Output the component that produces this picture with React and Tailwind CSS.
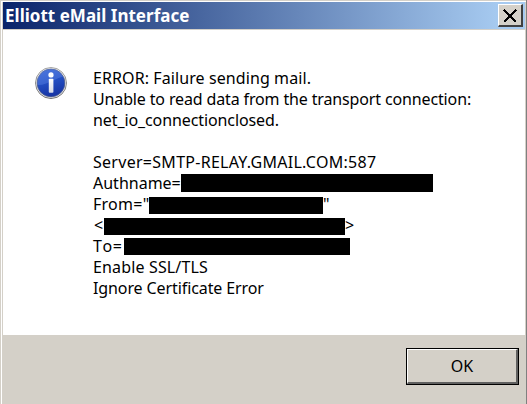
import React from 'react';

const messageLines = [
    { text: 'ERROR: Failure sending mail.', className: 'tracking-[0.09px]' },
    { text: 'Unable to read data from the transport connection:', className: 'tracking-[-0.14px]' },
    { text: 'net_io_connectionclosed.', className: 'tracking-[-0.1px]' },
    { text: '', className: '' },
    { text: 'Server=SMTP-RELAY.GMAIL.COM:587', className: 'tracking-[0.28px]' },
    { text: 'Authname=', className: 'w-[88px]', bar: 'w-[252px] h-[18px] mt-px' },
    { text: 'From="', className: 'w-[56px] tracking-[0.25px]', bar: 'w-[174px] h-[17px] mt-[3px]', after: '"' },
    { text: '<', className: 'w-[11px] pl-px', bar: 'w-[241px] h-[17px] mt-[3px]', after: '>' },
    { text: 'To=', className: 'w-[31px] tracking-[0.6px] [font-kerning:none]', bar: 'w-[226px] h-[17px] mt-[2px]' },
    { text: 'Enable SSL/TLS', className: 'tracking-[0.15px]' },
    { text: 'Ignore Certificate Error', className: 'tracking-[-0.1px]' },
];

const InfoIcon = () => (
    <svg width="34" height="34" viewBox="0 0 34 34" className="shrink-0">
        <defs>
            <linearGradient id="ball" x1="0" y1="0" x2="0.3" y2="1">
                <stop offset="0" stopColor="#3c6ad8" />
                <stop offset="0.5" stopColor="#2450c4" />
                <stop offset="1" stopColor="#1736a6" />
            </linearGradient>
            <linearGradient id="rim" x1="0" y1="0" x2="0" y2="1">
                <stop offset="0" stopColor="#a4a4a4" />
                <stop offset="1" stopColor="#707070" />
            </linearGradient>
            <linearGradient id="stem" x1="0" y1="0" x2="0" y2="1">
                <stop offset="0" stopColor="#ffffff" />
                <stop offset="1" stopColor="#d5d9e6" />
            </linearGradient>
        </defs>
        <circle cx="16" cy="17" r="15.5" fill="#eeeeee" stroke="url(#rim)" strokeWidth="1" />
        <circle cx="16" cy="17" r="13.9" fill="url(#ball)" stroke="#4d5c8c" strokeWidth="0.8" />
        <path d="M2.6 19A13.5 13.5 0 0 1 28 10.5C22 11.5 11 20 2.6 19Z" fill="#6b90ea" opacity="0.35" />
        <circle cx="16" cy="8.9" r="2.6" fill="#fff" />
        <rect x="13.8" y="12.8" width="4.6" height="14" rx="0.8" fill="url(#stem)" />
    </svg>
);

const TitleBar = () => (
    <div className="flex h-[27px] items-center justify-between bg-linear-to-r/srgb from-[#0a246a] to-[#a6caf0] to-[95%] pl-[2px] pr-[2px]">
        <span className="whitespace-pre text-[17px] font-bold leading-[27px] text-white tracking-[0.02px]">Elliott eMail Interface</span>
        <button
            aria-label="Close"
            className="flex h-[23px] w-[25px] items-center justify-center border-b-2 border-l border-r-2 border-t border-b-[#404040] border-l-white border-r-[#404040] border-t-white bg-[#d4d0c8]"
        >
            <svg width="14" height="14" viewBox="0 0 14 14" shapeRendering="crispEdges" className="mt-px">
                <path d="M1 1L13 13M13 1L1 13" stroke="#000" strokeWidth="2.2" />
            </svg>
        </button>
    </div>
);

const App = () => {
    return (
        <div className="flex h-[404px] w-[527px] overflow-hidden border-r border-[#808080] bg-[#d4d0c8] pl-px pt-px font-['Noto_Sans',sans-serif] text-black">
            <div className="flex flex-1 flex-col border-l border-t border-white pl-px pr-px">
                <TitleBar />

                {/* Message area */}
                <div className="mt-px flex h-[305px] bg-white pl-[32px] pt-[36px]">
                    <InfoIcon />
                    <div className="ml-[24px] mt-[2px] text-[16px] leading-[21px]">
                        {messageLines.map((line, i) => (
                            <div key={i} className="flex h-[21px] whitespace-pre">
                                <span className={line.className}>{line.text}</span>
                                {line.bar && <span className={`shrink-0 bg-black ${line.bar}`}></span>}
                                {line.after && <span>{line.after}</span>}
                            </div>
                        ))}
                    </div>
                </div>

                {/* Footer */}
                <div className="flex justify-end pr-[6px] pt-[13px]">
                    <button className="h-[37px] w-[113px] border border-black bg-[#d4d0c8]">
                        <span className="flex h-full items-center justify-center border-b-2 border-l border-r-2 border-t border-b-[#606060] border-l-white border-r-[#606060] border-t-white text-[16px]">
                            OK
                        </span>
                    </button>
                </div>
            </div>
        </div>
    );
};

export default App;
